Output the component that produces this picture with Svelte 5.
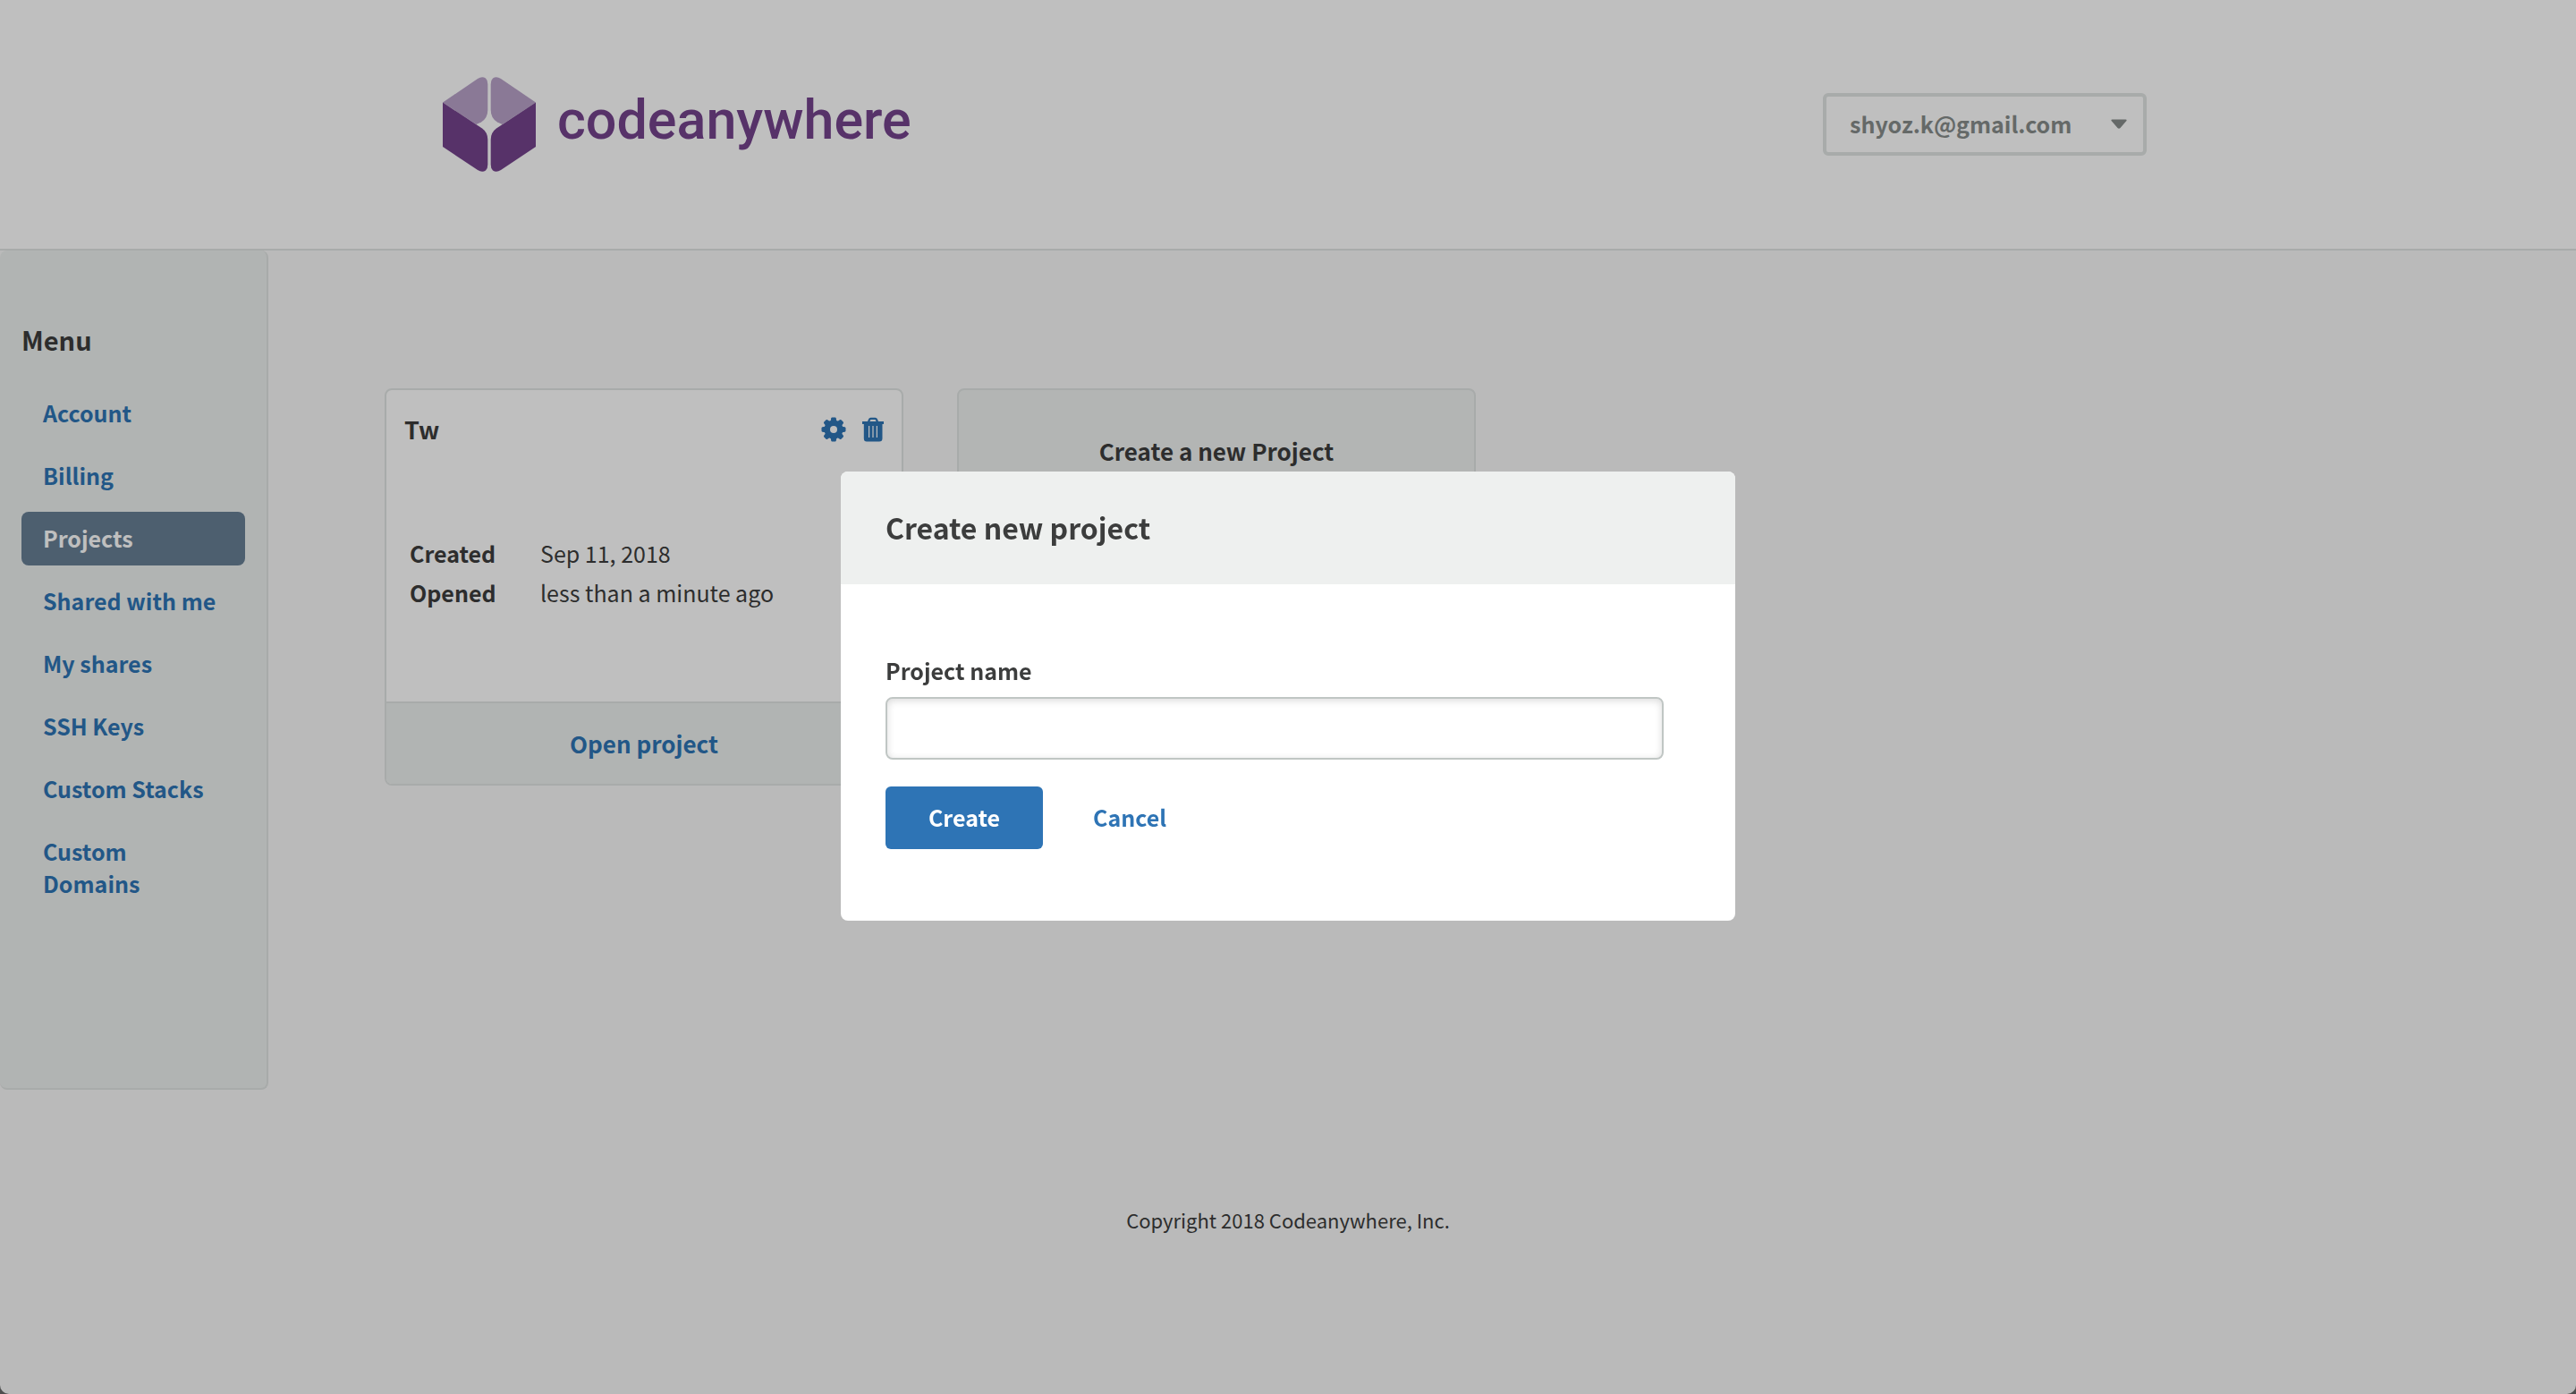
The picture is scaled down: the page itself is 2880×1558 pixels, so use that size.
<script>
  const menu = [
    'Account',
    'Billing',
    'Projects',
    'Shared with me',
    'My shares',
    'SSH Keys',
    'Custom Stacks',
    'Custom Domains'
  ];
  const active = 'Projects';
  const details = [
    ['Created', 'Sep 11, 2018'],
    ['Opened', 'less than a minute ago']
  ];
  const teeth = [0, 45, 90, 135, 180, 225, 270, 315];
  let name = $state('');
</script>

<div class="page">
  <header class="top">
    <div class="top-inner">
      <a class="brand" href="#home" aria-label="codeanywhere">
        <svg class="mark" viewBox="0 0 104 106" aria-hidden="true">
          <g class="light">
            <path d="M0 28.500 L39 2 Q44 -1.200 48 1.500 Q50.300 3.500 50.300 8 V37 Q50.300 46 43 50.500 L37.500 53 Z" />
            <path d="M104 28.500 L65 2 Q60 -1.200 56 1.500 Q53.700 3.500 53.700 8 V37 Q53.700 46 61 50.500 L66.500 53 Z" />
          </g>
          <g class="dark">
            <path d="M0 28.500 L44 57.500 Q50.300 62 50.300 70 V98 Q50.300 102.500 48 104.500 Q44 107.200 39 104 L0 78 Z" />
            <path d="M104 28.500 L60 57.500 Q53.700 62 53.700 70 V98 Q53.700 102.500 56 104.500 Q60 107.200 65 104 L104 78 Z" />
          </g>
        </svg>
        <span class="wordmark">codeanywhere</span>
      </a>
      <button class="user" type="button" aria-haspopup="menu">
        <span>shyoz.k@gmail.com</span>
        <svg class="caret" viewBox="0 0 18 12" aria-hidden="true">
          <path d="M1.500 0.500 H16.500 Q18.500 1 17 2.500 L10.500 10 Q9 11.500 7.500 10 L1 2.500 Q-0.500 1 1.500 0.500 Z" />
        </svg>
      </button>
    </div>
  </header>

  <div class="body">
    <nav class="side" aria-label="Menu">
      <h2>Menu</h2>
      <ul>
        {#each menu as item}
          <li><a href="#{item}" class:active={item === active}>{item}</a></li>
        {/each}
      </ul>
    </nav>

    <main class="cards">
      <article class="card">
        <div class="card-head">
          <h3>Tw</h3>
          <div class="tools">
            <button type="button" aria-label="Project settings">
              <svg class="icon" viewBox="0 0 28 28" aria-hidden="true">
                <mask id="gear-hole">
                  <rect width="28" height="28" fill="#fff" />
                  <circle cx="14" cy="14" r="4" fill="#000" />
                </mask>
                <g mask="url(#gear-hole)">
                  <circle cx="14" cy="14" r="10.500" />
                  {#each teeth as angle}
                    <path d="M10.500 6 L11.200 1.500 Q11.400 0.500 12.400 0.500 H15.600 Q16.600 0.500 16.800 1.500 L17.500 6 Z" transform="rotate({angle} 14 14)" />
                  {/each}
                </g>
              </svg>
            </button>
            <button type="button" aria-label="Delete project">
              <svg class="icon" viewBox="0 0 28 28" aria-hidden="true">
                <path fill-rule="evenodd" d="M2 5 H8 L9 2.500 Q9.700 0.800 11.500 0.800 H16.500 Q18.300 0.800 19 2.500 L20 5 H26 V8 H24.500 V24 Q24.500 27.500 21 27.500 H7 Q3.800 27.500 3.800 24 V8 H2 Z M10.500 5 H17.500 L17 3.500 Q16.800 3 16.200 3 H11.800 Q11.200 3 11 3.500 Z M9 10 V23 H10.200 V10 Z M13.400 10 V23 H14.600 V10 Z M17.800 10 V23 H19 V10 Z" />
              </svg>
            </button>
          </div>
        </div>
        <dl>
          {#each details as [term, value]}
            <dt>{term}</dt>
            <dd>{value}</dd>
          {/each}
        </dl>
        <a class="open" href="#open">Open project</a>
      </article>

      <article class="card new">
        <h3>Create a new Project</h3>
      </article>
    </main>
  </div>

  <footer>Copyright 2018 Codeanywhere, Inc.</footer>
</div>

<div class="overlay">
  <div class="dialog" role="dialog" aria-modal="true" aria-labelledby="dialog-title">
    <h2 id="dialog-title">Create new project</h2>
    <form onsubmit={(e) => e.preventDefault()}>
      <label for="project-name">Project name</label>
      <input id="project-name" type="text" bind:value={name} />
      <div class="actions">
        <button class="create" type="submit">Create</button>
        <button class="cancel" type="button">Cancel</button>
      </div>
    </form>
  </div>
</div>

<style>
  :global(html) {
    background: #6a6a6a;
  }

  :global(body) {
    color: #3c3d3d;
    font-family: 'Noto Sans CJK JP', 'Noto Sans', sans-serif;
    font-size: 25px;
    line-height: 36px;
  }

  h2,
  h3,
  ul,
  dl,
  dd {
    margin: 0;
    padding: 0;
  }

  a {
    color: #2e74b5;
    text-decoration: none;
  }

  button {
    border: 0;
    padding: 0;
    background: none;
    color: inherit;
    font: inherit;
    cursor: pointer;
  }

  .page {
    display: flex;
    flex-direction: column;
    min-height: 100vh;
    background: #f9f9f9;
    border-radius: 0 0 10px 10px;
  }

  .top {
    background: #fff;
    border-bottom: 2px solid #e0e4e3;
  }

  .top-inner {
    box-sizing: border-box;
    display: flex;
    align-items: center;
    justify-content: space-between;
    max-width: 1920px;
    height: 278px;
    margin: 0 auto;
    padding-left: 15px;
  }

  .brand {
    display: flex;
    align-items: center;
    gap: 24px;
    color: #74438d;
  }

  .mark {
    width: 104px;
    height: 106px;
  }

  .light {
    fill: #b8a2c9;
  }

  .dark {
    fill: #74438d;
  }

  .wordmark {
    font-family: Roboto, sans-serif;
    font-size: 61px;
    font-weight: 500;
    line-height: 72px;
    padding-bottom: 10px;
  }

  .user {
    box-sizing: border-box;
    display: flex;
    align-items: center;
    justify-content: space-between;
    width: 362px;
    height: 70px;
    border: 4px solid #e0e4e3;
    border-radius: 6px;
    padding: 0 18px 0 26px;
    color: #878d8b;
    font-weight: 600;
  }

  .user span {
    padding-bottom: 2px;
  }

  .caret {
    width: 18px;
    height: 12px;
    fill: #878d8b;
  }

  .body {
    display: flex;
    align-items: flex-start;
    gap: 130px;
  }

  .side {
    box-sizing: border-box;
    width: 300px;
    min-height: 938px;
    padding: 80px 24px 24px;
    background: #edf0ef;
    border: solid #e0e4e3;
    border-width: 0 2px 2px 0;
    border-radius: 8px;
  }

  .side h2 {
    font-size: 29px;
    font-weight: 600;
    line-height: 38px;
    margin-bottom: 34px;
  }

  .side ul {
    display: grid;
    gap: 10px;
    list-style: none;
  }

  .side li a {
    display: block;
    padding: 11px 24px 13px;
    border-radius: 8px;
    font-weight: 600;
  }

  .side li a.active {
    background: #677f95;
    color: #fff;
  }

  .cards {
    display: grid;
    grid-template-columns: 580px 580px;
    gap: 60px;
    padding-top: 154px;
  }

  .card {
    display: flex;
    flex-direction: column;
    min-height: 440px;
    background: #fff;
    border: 2px solid #e0e4e3;
    border-radius: 8px;
    overflow: hidden;
  }

  .card-head {
    display: flex;
    align-items: center;
    justify-content: space-between;
    padding: 24px 18px 0 20px;
  }

  .card h3 {
    font-size: 27px;
    font-weight: 600;
    line-height: 40px;
  }

  .tools {
    display: flex;
    gap: 16px;
  }

  .tools button {
    display: flex;
  }

  .icon {
    width: 28px;
    height: 28px;
    fill: #2e74b5;
  }

  dl {
    display: grid;
    grid-template-columns: 146px 1fr;
    line-height: 44px;
    padding: 96px 26px 0;
  }

  dt {
    font-weight: 600;
  }

  .open {
    margin-top: auto;
    padding: 25px 0;
    background: #edf0ef;
    border-top: 2px solid #e0e4e3;
    font-size: 26px;
    font-weight: 600;
    line-height: 40px;
    text-align: center;
  }

  .new {
    background: #eff2f1;
    text-align: center;
  }

  .card.new h3 {
    padding-top: 48px;
    font-size: 26px;
  }

  footer {
    padding: 127px 0 150px;
    font-size: 22px;
    text-align: center;
  }

  .overlay {
    position: fixed;
    inset: 0;
    display: flex;
    align-items: center;
    justify-content: center;
    padding-bottom: 2px;
    background: rgba(0, 0, 0, 0.25);
  }

  .dialog {
    width: 1000px;
    background: #fff;
    border-radius: 8px;
    overflow: hidden;
  }

  .dialog h2 {
    padding: 38px 50px 40px;
    background: #eef0ef;
    font-size: 32px;
    font-weight: 600;
    line-height: 48px;
  }

  form {
    display: flex;
    flex-direction: column;
    padding: 78px 80px 80px 50px;
  }

  label {
    font-weight: 600;
    margin-bottom: 12px;
  }

  input {
    box-sizing: border-box;
    height: 70px;
    padding: 0 20px;
    border: 2px solid #c0c6c4;
    border-radius: 8px;
    background: #fff;
    box-shadow: inset 0 2px 8px rgba(0, 0, 0, 0.15);
    color: inherit;
    font: inherit;
  }

  .actions {
    display: flex;
    gap: 56px;
    margin-top: 30px;
    font-weight: 600;
  }

  .actions button {
    height: 70px;
    padding-bottom: 2px;
  }

  .create {
    width: 176px;
    border-radius: 6px;
    background: #2e74b5;
    color: #fff;
  }

  .cancel {
    color: #2e74b5;
  }
</style>
